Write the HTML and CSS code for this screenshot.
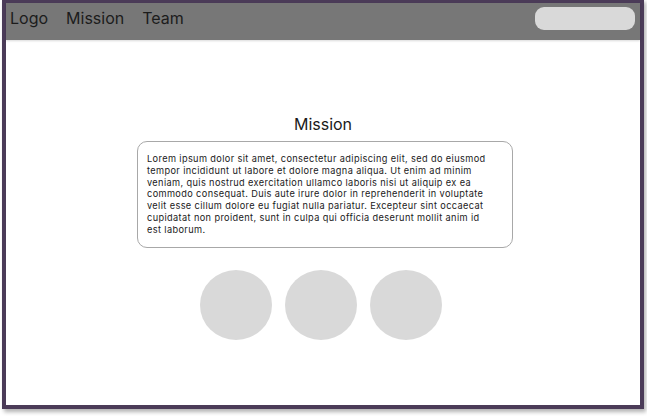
FILE: index.html
```html
<!DOCTYPE html>
<html>
<head>
<meta charset="utf-8">
<link rel="stylesheet" href="styles.css">
</head>
<body>
<div class="frame">
  <header class="topbar">
    <nav class="nav">
      <span>Logo</span>
      <span>Mission</span>
      <span>Team</span>
    </nav>
    <div class="search"></div>
  </header>
  <main class="content">
    <h1 class="title">Mission</h1>
    <div class="card">
      <p>Lorem ipsum dolor sit amet, consectetur adipiscing elit, sed do eiusmod tempor incididunt ut labore et dolore magna aliqua. Ut enim ad minim veniam, quis nostrud exercitation ullamco laboris nisi ut aliquip ex ea commodo consequat. Duis aute irure dolor in reprehenderit in voluptate velit esse cillum dolore eu fugiat nulla pariatur. Excepteur sint occaecat cupidatat non proident, sunt in culpa qui officia deserunt mollit anim id est laborum.</p>
    </div>
    <div class="avatars">
      <div class="avatar"></div>
      <div class="avatar"></div>
      <div class="avatar"></div>
    </div>
  </main>
</div>
</body>
</html>
```
FILE: styles.css
```css
html, body {
  margin: 0;
  padding: 0;
  background: #ffffff;
}
body {
  width: 647px;
  height: 416px;
  overflow: hidden;
  font-family: Inter, "Noto Sans", sans-serif;
}
.frame {
  box-sizing: border-box;
  margin: -1px 0 0 2px;
  width: 642px;
  height: 410px;
  border: 4px solid #4b3b58;
  box-shadow: 2px 3px 4px rgba(0, 0, 0, 0.3);
  background: #ffffff;
  display: flex;
  flex-direction: column;
}
.topbar {
  height: 37px;
  background: #777777;
  display: flex;
  align-items: flex-start;
  justify-content: space-between;
  box-shadow: 0 1px 2px rgba(0, 0, 0, 0.15);
}
.nav {
  display: flex;
  gap: 18px;
  padding: 5px 0 0 4px;
  font-size: 16px;
  line-height: 20px;
  color: #1c1c1c;
}
.search {
  width: 100px;
  height: 23px;
  margin: 4px 5px 0 0;
  border-radius: 9px;
  background: #d9d9d9;
}
.content {
  flex: 1;
  display: flex;
  flex-direction: column;
  align-items: center;
}
.title {
  margin: 74px 0 0 0;
  font-size: 16px;
  font-weight: 400;
  line-height: 20px;
  color: #1a1a1a;
}
.card {
  box-sizing: border-box;
  margin: 7px 0 0 4px;
  width: 376px;
  height: 107px;
  border: 1px solid #a8a8a8;
  border-radius: 10px;
  padding: 11px 17px 0 9px;
}
.card p {
  margin: 0;
  font-size: 9.2px;
  line-height: 11.8px;
  letter-spacing: 0.38px;
  color: #1a1a1a;
}
.avatars {
  margin: 22px 4px 0 0;
  display: flex;
  gap: 13px;
}
.avatar {
  width: 72px;
  height: 70px;
  border-radius: 50%;
  background: #d9d9d9;
}
```
